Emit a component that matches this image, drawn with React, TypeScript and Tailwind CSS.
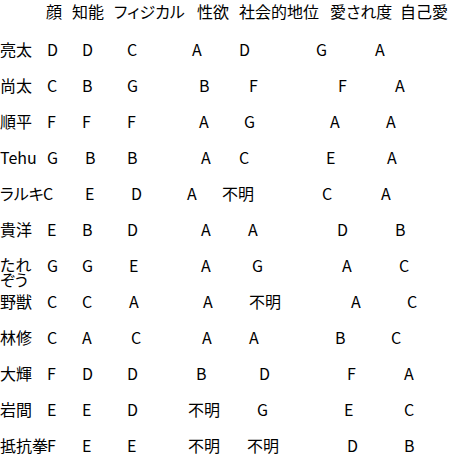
import type { ReactNode } from "react";

// column starts in px, measured from the left edge of the page
type Cell = [string, number];

const header: Cell[] = [
  ["", 0],
  ["顔", 47],
  ["知能", 73],
  ["フィジカル", 115],
  ["性欲", 198],
  ["社会的地位", 240],
  ["愛され度", 331],
  ["自己愛", 401],
];

const rows: Cell[][] = [
  [["亮太", 0], ["D", 48], ["D", 83], ["C", 128], ["A", 193], ["D", 240], ["G", 317], ["A", 376]],
  [["尚太", 0], ["C", 48], ["B", 83], ["G", 128], ["B", 200], ["F", 250], ["F", 339], ["A", 396]],
  [["順平", 0], ["F", 48], ["F", 83], ["F", 128], ["A", 200], ["G", 245], ["A", 331], ["A", 387]],
  [["Tehu", 0], ["G", 48], ["B", 86], ["B", 128], ["A", 202], ["C", 240], ["E", 327], ["A", 388]],
  [["ラルキ", 0], ["C", 44], ["E", 86], ["D", 132], ["A", 188], ["不明", 223], ["C", 323], ["A", 382]],
  [["貴洋", 0], ["E", 48], ["B", 83], ["D", 128], ["A", 202], ["A", 249], ["D", 338], ["B", 396]],
  [["たれ\nぞう", 0], ["G", 48], ["G", 83], ["E", 130], ["A", 202], ["G", 253], ["A", 343], ["C", 400]],
  [["野獣", 0], ["C", 48], ["C", 83], ["A", 130], ["A", 204], ["不明", 250], ["A", 352], ["C", 408]],
  [["林修", 0], ["C", 48], ["A", 83], ["C", 132], ["A", 203], ["A", 250], ["B", 336], ["C", 392]],
  [["大輝", 0], ["F", 48], ["D", 83], ["D", 128], ["B", 197], ["D", 260], ["F", 348], ["A", 405]],
  [["岩間", 0], ["E", 48], ["E", 83], ["D", 128], ["不明", 189], ["G", 258], ["E", 345], ["C", 405]],
  [["抵抗拳", 0], ["F", 48], ["E", 83], ["E", 128], ["不明", 189], ["不明", 248], ["D", 348], ["B", 405]],
];

const start = (x: number) => (x === 0 ? 0 : x - 1);

function Line({ cells, className }: { cells: Cell[]; className: string }) {
  const out: ReactNode[] = cells.map(([text, x], i) => {
    const next = cells[i + 1];
    const width = next ? start(next[1]) - start(x) : undefined;
    const twoLines = text.includes("\n");
    return (
      <span
        key={i}
        className={`${next ? "shrink-0" : "flex-1"} whitespace-pre ${twoLines ? "leading-[15px]" : ""}`}
        style={width !== undefined ? { width } : undefined}
      >
        {text}
      </span>
    );
  });
  return <div className={`flex items-start ${className}`}>{out}</div>;
}

export default function App() {
  return (
    <div className="min-h-screen bg-white pt-[3px] text-[16px] leading-4 text-black font-['Noto_Sans_CJK_JP',sans-serif] [font-feature-settings:'palt']">
      <Line cells={header} className="h-[38px]" />
      {rows.map((r, i) => (
        <Line key={i} cells={r} className="h-9" />
      ))}
    </div>
  );
}
